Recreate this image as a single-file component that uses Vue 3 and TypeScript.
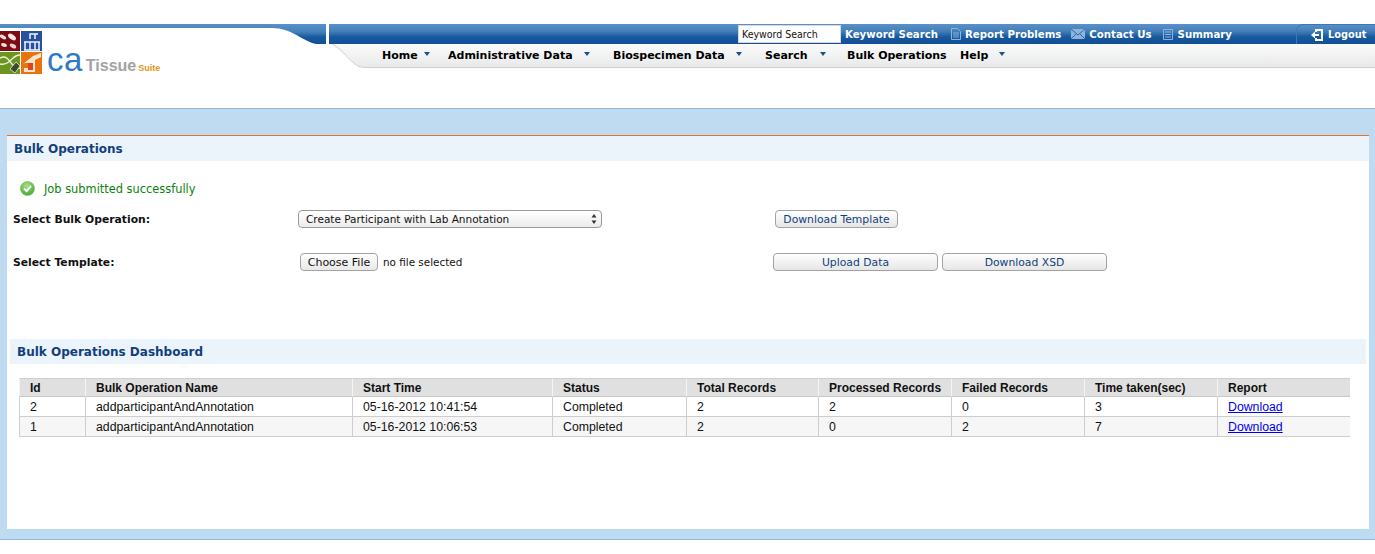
<template>
  <div class="page">
    <header class="header">
      <div class="brand">
        <svg class="band-curve" width="326" height="20" viewBox="0 0 326 20">
          <defs>
            <linearGradient id="bandFill" x1="0" y1="0" x2="0" y2="1">
              <stop offset="0" stop-color="#5a91c6" />
              <stop offset="0.4" stop-color="#4380bb" />
              <stop offset="0.65" stop-color="#18589f" />
              <stop offset="1" stop-color="#125096" />
            </linearGradient>
          </defs>
          <path d="M0 0H326V20H316C300 16 292 4 272 4H0Z" fill="url(#bandFill)" />
        </svg>
        <div class="logo">
          <svg width="42" height="43" viewBox="0 0 42 43">
            <rect width="20" height="20" fill="#7c0b14" />
            <ellipse cx="3" cy="6" rx="3.500" ry="1.800" fill="#f3dcdc" transform="rotate(30 3 6)" />
            <ellipse cx="12" cy="6" rx="4.500" ry="2.400" fill="#f6e6e6" transform="rotate(35 12 6)" />
            <ellipse cx="4" cy="14" rx="3" ry="1.800" fill="#f3dcdc" transform="rotate(20 4 14)" />
            <ellipse cx="13" cy="15" rx="3.500" ry="2" fill="#eccccc" transform="rotate(30 13 15)" />
            <rect x="21" width="21" height="20" fill="#27519f" />
            <path d="M24 11h16M25 11v8M30 11v8M35 11v8M39 11v8M24 19h16M30 8V3h5v5M33 3h5" stroke="#eef3fb" stroke-width="1.500" fill="none" />
            <rect y="21" width="20" height="22" fill="#6c9420" />
            <path d="M0 27c6-3 8 1 12 6s6 5 8 4M0 33c6 1 9-2 12-5s5-4 8-4" stroke="#eef3d8" stroke-width="1.400" fill="none" />
            <path d="M10 38l6-7 4 4-5 7z" fill="#3a4a2a" stroke="#e8eed0" stroke-width=".8" />
            <rect x="21" y="21" width="21" height="22" fill="#e8740f" />
            <path d="M23 33l10-8 8-3v4l-6 3v12h-11v-4h8v-5h-7z" fill="#fbe3cd" />
            <path d="M28 32h5v7h-5z" fill="#e0421a" />
          </svg>
          <span class="logo-ca">ca</span>
          <span class="logo-tissue">Tissue</span>
          <span class="logo-suite">Suite</span>
        </div>
      </div>

      <div class="nav-area">
        <div class="topbar">
          <input class="keyword" type="text" value="Keyword Search" />
          <a class="top-link first">Keyword Search</a>
          <a class="top-link report">
            <svg width="10" height="12" viewBox="0 0 10 12">
              <path d="M.5.5h6l3 3v8h-9zM2 5h6M2 7h6M2 9h6" fill="none" stroke="#8fb4dc" />
            </svg>
            Report Problems
          </a>
          <a class="top-link contact">
            <svg width="14" height="10" viewBox="0 0 14 10">
              <rect width="14" height="10" fill="#8fb4dc" />
              <path d="M0 0l7 6 7-6M0 10l5-5M14 10L9 5" fill="none" stroke="#2c69ab" />
            </svg>
            Contact Us
          </a>
          <a class="top-link summary">
            <svg width="10" height="11" viewBox="0 0 10 11">
              <path d="M.5.5h9v10h-9zM2 3h6M2 5.500h6M2 8h6" fill="none" stroke="#8fb4dc" />
            </svg>
            Summary
          </a>
          <a class="logout">
            <svg width="14" height="14" viewBox="0 0 14 14">
              <path d="M5 1h8v12H5v-3h2v1h4V3H7v1H5z" fill="#fff" />
              <path d="M1 7l4-3.500V6h4v2H5v2.500z" fill="#fff" />
            </svg>
            Logout
          </a>
        </div>
        <div class="subnav">
          <svg class="subnav-curve" width="34" height="24" viewBox="0 0 34 24">
            <defs>
              <linearGradient id="subFill" x1="0" y1="0" x2="0" y2="1">
                <stop offset="0" stop-color="#fbfbfb" />
                <stop offset="1" stop-color="#e8e9ea" />
              </linearGradient>
            </defs>
            <path d="M3 0H34V23H31C22 20 14 5 3 0Z" fill="url(#subFill)" />
            <path d="M3 0C14 5 22 20 31 23H34" fill="none" stroke="#cfcfcf" />
          </svg>
          <nav class="menu">
            <a v-for="item in menu" :key="item.label" class="menu-item" :style="{ width: item.width + 'px' }">
              {{ item.label }}
              <i v-if="item.caret" class="caret" :style="{ marginLeft: item.caret + 'px' }"></i>
            </a>
          </nav>
        </div>
      </div>
    </header>

    <main class="content">
      <section class="panel">
        <h2 class="panel-title">Bulk Operations</h2>

        <div class="message">
          <svg width="15" height="15" viewBox="0 0 15 15">
            <defs>
              <radialGradient id="okFill" cx="0.45" cy="0.3" r="0.75">
                <stop offset="0" stop-color="#a9e08a" />
                <stop offset="1" stop-color="#3ea52c" />
              </radialGradient>
            </defs>
            <circle cx="7.500" cy="7.500" r="7" fill="url(#okFill)" stroke="#6bb85c" stroke-width=".6" />
            <path d="M4 7.500l2.600 2.600L11 4.800" fill="none" stroke="#fff" stroke-width="2" />
          </svg>
          <span>Job submitted successfully</span>
        </div>

        <div class="form">
          <label class="form-label">Select Bulk Operation:</label>
          <div class="select-wrap">
            <select class="select">
              <option>Create Participant with Lab Annotation</option>
            </select>
            <svg class="select-arrows" width="6" height="10" viewBox="0 0 6 10">
              <path d="M3 0l2.500 3.500h-5zM3 10L.5 6.500h5z" fill="#333" />
            </svg>
          </div>
          <div class="actions">
            <button class="btn template" type="button">Download Template</button>
          </div>

          <label class="form-label">Select Template:</label>
          <div class="file">
            <button class="file-btn" type="button">Choose File</button>
            <span>no file selected</span>
          </div>
          <div class="actions">
            <button class="btn wide" type="button">Upload Data</button>
            <button class="btn wide" type="button">Download XSD</button>
          </div>
        </div>

        <h2 class="panel-title dashboard">Bulk Operations Dashboard</h2>

        <table class="jobs">
          <colgroup>
            <col v-for="w in colWidths" :key="w.id" :style="{ width: w.px + 'px' }" />
          </colgroup>
          <thead>
            <tr>
              <th v-for="h in headers" :key="h">{{ h }}</th>
            </tr>
          </thead>
          <tbody>
            <tr v-for="row in rows" :key="row.id">
              <td>{{ row.id }}</td>
              <td>{{ row.name }}</td>
              <td>{{ row.start }}</td>
              <td>{{ row.status }}</td>
              <td>{{ row.total }}</td>
              <td>{{ row.processed }}</td>
              <td>{{ row.failed }}</td>
              <td>{{ row.time }}</td>
              <td><a class="download" href="#">Download</a></td>
            </tr>
          </tbody>
        </table>
      </section>
    </main>
  </div>
</template>

<script setup lang="ts">
const menu = [
  { label: 'Home', width: 66, caret: 6 },
  { label: 'Administrative Data', width: 165, caret: 11 },
  { label: 'Biospecimen Data', width: 152, caret: 11 },
  { label: 'Search', width: 82, caret: 12 },
  { label: 'Bulk Operations', width: 113, caret: 0 },
  { label: 'Help', width: 60, caret: 11 }
];

const colWidths = [66, 267, 200, 134, 132, 133, 133, 133, 133].map((px, id) => ({ id, px }));

const headers = [
  'Id',
  'Bulk Operation Name',
  'Start Time',
  'Status',
  'Total Records',
  'Processed Records',
  'Failed Records',
  'Time taken(sec)',
  'Report'
];

const rows = [
  { id: 2, name: 'addparticipantAndAnnotation', start: '05-16-2012 10:41:54', status: 'Completed', total: 2, processed: 2, failed: 0, time: 3 },
  { id: 1, name: 'addparticipantAndAnnotation', start: '05-16-2012 10:06:53', status: 'Completed', total: 2, processed: 0, failed: 2, time: 7 }
];
</script>

<style>
html,
body {
  background: #fff;
}
</style>

<style scoped>
.page {
  width: 1375px;
  height: 554px;
  overflow: hidden;
  font-family: "DejaVu Sans", Verdana, sans-serif;
}

.header {
  display: flex;
  padding-top: 24px;
  height: 108px;
  box-sizing: border-box;
}

.brand {
  width: 326px;
  margin-right: 3px;
}

.band-curve {
  display: block;
}

.logo {
  display: flex;
  align-items: baseline;
  margin-top: -13px;
  height: 43px;
}

.logo svg {
  align-self: flex-start;
}

.logo-ca {
  margin-left: 5px;
  padding-top: 7px;
  font-family: "Liberation Sans", sans-serif;
  font-size: 33px;
  line-height: 43px;
  color: #2f7ac4;
  letter-spacing: 0.5px;
}

.logo-tissue {
  margin-left: 3px;
  font-family: "Liberation Sans", sans-serif;
  font-size: 16px;
  font-weight: bold;
  color: #a2a2a2;
}

.logo-suite {
  margin-left: 2px;
  font-family: "Liberation Sans", sans-serif;
  font-size: 9px;
  font-weight: bold;
  color: #e09418;
}

.nav-area {
  flex: 1;
  min-width: 0;
}

.topbar {
  display: flex;
  align-items: center;
  height: 20px;
  background: linear-gradient(#5a91c6, #4380bb 35%, #18589f 65%, #125096);
  color: #fff;
  font-size: 10.2px;
  font-weight: bold;
}

.keyword {
  box-sizing: border-box;
  width: 103px;
  height: 18px;
  margin-left: 409px;
  padding: 0 3px;
  border: 1px solid #d8d8d8;
  background: #fff;
  color: #111;
  font-family: "DejaVu Sans", sans-serif;
  font-stretch: condensed;
  font-size: 10.5px;
  outline: none;
}

.top-link {
  display: flex;
  align-items: center;
  white-space: nowrap;
}

.top-link svg {
  margin-right: 4px;
}

.first {
  margin-left: 4px;
}

.report {
  margin-left: 13px;
}

.contact {
  margin-left: 10px;
}

.summary {
  margin-left: 11px;
}

.summary svg {
  margin-right: 5px;
}

.logout {
  display: flex;
  align-items: center;
  gap: 4px;
  box-sizing: border-box;
  width: 79px;
  height: 20px;
  margin-left: auto;
  padding-left: 13px;
  border: 1px solid #3e78b4;
  border-bottom: 0;
  border-right: 0;
  border-radius: 7px 0 0 0;
  font-size: 9.800px;
}

.subnav {
  display: flex;
  height: 24px;
}

.subnav-curve {
  flex: none;
  display: block;
}

.menu {
  flex: 1;
  display: flex;
  align-items: center;
  box-sizing: border-box;
  height: 24px;
  padding-left: 19px;
  padding-bottom: 1px;
  background: linear-gradient(#fbfbfb, #e8e9ea);
  border-bottom: 1px solid #cfcfcf;
  color: #000;
  font-size: 11px;
  font-weight: bold;
}

.menu-item {
  display: flex;
  align-items: center;
  flex: none;
  white-space: nowrap;
}

.caret {
  width: 0;
  height: 0;
  margin-top: -3px;
  border-left: 3.5px solid transparent;
  border-right: 3.5px solid transparent;
  border-top: 4px solid #1c4f8f;
}

.content {
  box-sizing: border-box;
  height: 432px;
  padding: 26px 6px 0 7px;
  background: #bfdbf2;
  border-top: 1px solid #8fb9dd;
  border-bottom: 1px solid #8fb9dd;
}

.panel {
  box-sizing: border-box;
  height: 394px;
  background: #fff;
  border-top: 1px solid #e8731c;
}

.panel-title {
  box-sizing: border-box;
  height: 25px;
  margin: 0;
  padding-left: 7px;
  background: #ebf3fb;
  color: #123f7c;
  font-size: 12px;
  font-weight: bold;
  line-height: 27px;
}

.message {
  display: flex;
  align-items: center;
  gap: 9px;
  height: 15px;
  margin: 20px 0 0 13px;
  color: #0b820b;
  font-size: 11.4px;
}

.form {
  display: grid;
  grid-template-columns: 285px 475px auto;
  grid-template-rows: 18px 18px;
  row-gap: 25px;
  align-items: center;
  margin: 14px 0 0 6px;
  font-size: 10.4px;
}

.form-label {
  color: #111;
  font-size: 10.8px;
  font-weight: bold;
}

.select-wrap {
  position: relative;
  width: 304px;
}

.select {
  appearance: none;
  display: block;
  box-sizing: border-box;
  width: 304px;
  height: 18px;
  padding: 0 0 0 7px;
  border: 1px solid #9a9a9a;
  border-radius: 4px;
  background: linear-gradient(#fff, #ececec);
  color: #111;
  font-family: "DejaVu Sans", sans-serif;
  font-size: 10.500px;
}

.select-arrows {
  position: absolute;
  top: 4px;
  right: 5px;
}

.actions {
  display: flex;
  gap: 4px;
}

.btn {
  height: 18px;
  padding: 0;
  border: 1px solid #a3a3a3;
  border-radius: 4px;
  background: linear-gradient(#fff, #e6e6e6);
  color: #123f7c;
  font-family: "DejaVu Sans", sans-serif;
  font-size: 10.8px;
}

.template {
  width: 123px;
  margin-left: 2px;
}

.wide {
  width: 165px;
}

.file {
  display: flex;
  align-items: center;
  gap: 5px;
  margin-left: 2px;
  color: #111;
}

.file-btn {
  width: 78px;
  height: 18px;
  padding: 0;
  border: 1px solid #a3a3a3;
  border-radius: 4px;
  background: linear-gradient(#fff, #e8e8e8);
  color: #111;
  font-family: "DejaVu Sans", sans-serif;
  font-size: 11px;
}

.dashboard {
  width: 1356px;
  margin: 68px 0 0 3px;
}

.jobs {
  width: 1331px;
  margin: 14px 0 0 12px;
  table-layout: fixed;
  border-collapse: separate;
  border-spacing: 0;
  font-family: "Liberation Sans", Arial, sans-serif;
  font-size: 12.3px;
  color: #111;
}

.jobs th {
  height: 17px;
  padding: 0 0 0 10px;
  background: #e0e0e0;
  border-top: 1px solid #cfcfcf;
  border-bottom: 1px solid #c8c8c8;
  border-left: 1px solid #f4f4f4;
  font-size: 12px;
  font-weight: bold;
  text-align: left;
}

.jobs td {
  height: 19px;
  padding: 0 0 0 10px;
  border-bottom: 1px solid #cdcdcd;
  border-left: 1px solid #cdcdcd;
}

.jobs tbody tr:nth-child(even) td {
  background: #f6f6f6;
}

.download {
  color: #0000ee;
}
</style>
